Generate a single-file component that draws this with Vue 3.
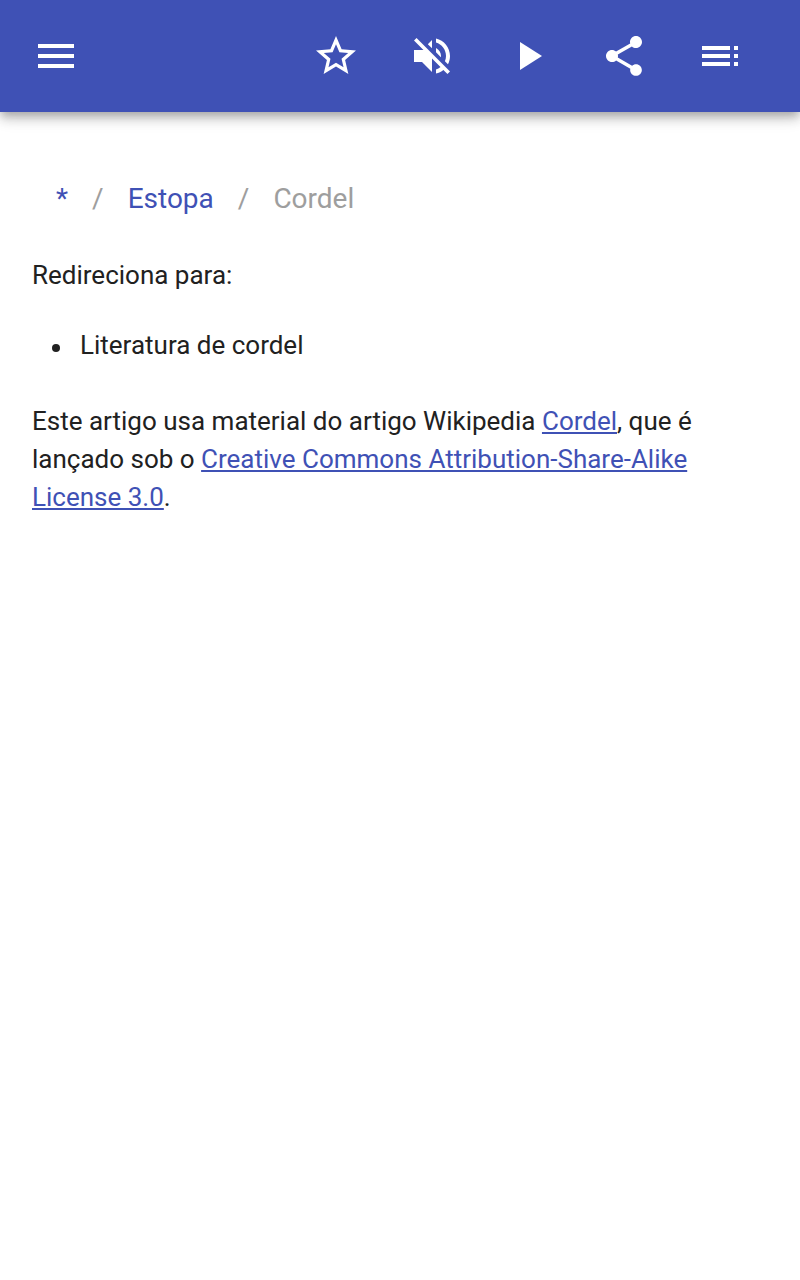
<template>
  <div class="page">
    <header class="toolbar">
      <button class="icon-button" aria-label="Menu">
        <svg viewBox="0 0 24 24"><path d="M3 18h18v-2H3v2zm0-5h18v-2H3v2zm0-7v2h18V6H3z" /></svg>
      </button>
      <div class="actions">
        <button v-for="icon in icons" :key="icon.label" class="icon-button" :aria-label="icon.label">
          <svg viewBox="0 0 24 24"><path :d="icon.path" /></svg>
        </button>
      </div>
    </header>

    <main class="content">
      <nav class="breadcrumb">
        <a>*</a>
        <span>/</span>
        <a>Estopa</a>
        <span>/</span>
        <span>Cordel</span>
      </nav>
      <p>Redireciona para:</p>
      <ul>
        <li>Literatura de cordel</li>
      </ul>
      <p class="license">
        Este artigo usa material do artigo Wikipedia <a>Cordel</a>, que é lançado sob o
        <a>Creative Commons Attribution-Share-Alike License 3.0</a>.
      </p>
    </main>
  </div>
</template>

<script setup>
const icons = [
  {
    label: 'Favorito',
    path: 'M22 9.24l-7.19-.62L12 2 9.19 8.63 2 9.24l5.46 4.73L5.82 21 12 17.27 18.18 21l-1.63-7.03L22 9.24zM12 15.4l-3.76 2.27 1-4.28-3.32-2.88 4.38-.38L12 6.1l1.71 4.04 4.38.38-3.32 2.88 1 4.28L12 15.4z'
  },
  {
    label: 'Som',
    path: 'M16.5 12c0-1.77-1.02-3.29-2.5-4.03v2.21l2.45 2.45c.03-.2.05-.41.05-.63zm2.5 0c0 .94-.2 1.82-.54 2.64l1.51 1.51C20.63 14.91 21 13.5 21 12c0-4.28-2.99-7.86-7-8.77v2.06c2.89.86 5 3.54 5 6.71zM4.27 3L3 4.27 7.73 9H3v6h4l5 5v-6.73l4.25 4.25c-.67.52-1.42.93-2.25 1.18v2.06c1.38-.31 2.63-.95 3.69-1.81L19.73 21 21 19.73l-9-9L4.27 3zM12 4L9.91 6.09 12 8.18V4z'
  },
  {
    label: 'Reproduzir',
    path: 'M8 5v14l11-7z'
  },
  {
    label: 'Compartilhar',
    path: 'M18 16.08c-.76 0-1.44.3-1.96.77L8.91 12.7c.05-.23.09-.46.09-.7s-.04-.47-.09-.7l7.05-4.11c.54.5 1.25.81 2.04.81 1.66 0 3-1.34 3-3s-1.34-3-3-3-3 1.34-3 3c0 .24.04.47.09.7L8.04 9.81C7.5 9.31 6.79 9 6 9c-1.66 0-3 1.34-3 3s1.34 3 3 3c.79 0 1.5-.31 2.04-.81l7.12 4.16c-.05.21-.08.43-.08.65 0 1.61 1.31 2.92 2.92 2.92s2.92-1.31 2.92-2.92-1.31-2.92-2.92-2.92z'
  },
  {
    label: 'Sumário',
    path: 'M3 9h14V7H3v2zm0 4h14v-2H3v2zm0 4h14v-2H3v2zm16 0h2v-2h-2v2zm0-10v2h2V7h-2zm0 6h2v-2h-2v2z'
  }
]
</script>

<style>
body {
  background: #fff;
}
</style>

<style scoped>
.page {
  min-height: 100vh;
  font-family: Roboto, sans-serif;
  color: #212121;
}
.toolbar {
  display: flex;
  align-items: center;
  justify-content: space-between;
  box-sizing: border-box;
  height: 112px;
  padding: 0 32px;
  background: #3f51b5;
  box-shadow:
    0 4px 8px -2px rgba(0, 0, 0, 0.2),
    0 8px 10px 0 rgba(0, 0, 0, 0.14),
    0 2px 20px 0 rgba(0, 0, 0, 0.12);
}
.actions {
  display: flex;
}
.icon-button {
  display: flex;
  padding: 0;
  border: none;
  background: none;
  cursor: pointer;
}
.actions .icon-button {
  padding: 0 24px;
}
svg {
  width: 48px;
  height: 48px;
  fill: #fff;
}
.content {
  padding: 65px 32px 0;
  font-size: 26px;
  line-height: 38px;
}
.breadcrumb {
  display: flex;
  gap: 24px;
  padding: 0 24px;
  font-size: 28px;
  line-height: 44px;
  color: #9e9e9e;
}
.breadcrumb a {
  color: #3f51b5;
}
p {
  margin: 35px 0 32px;
}
ul {
  margin: 0;
  padding: 0 0 0 20px;
  list-style: none;
}
li {
  display: flex;
  align-items: center;
  gap: 20px;
}
li::before {
  content: '';
  width: 8px;
  height: 8px;
  margin-top: 5px;
  border-radius: 50%;
  background: #212121;
}
.license {
  margin-top: 38px;
}
.license a {
  color: #3f51b5;
  text-decoration: underline;
}
</style>
